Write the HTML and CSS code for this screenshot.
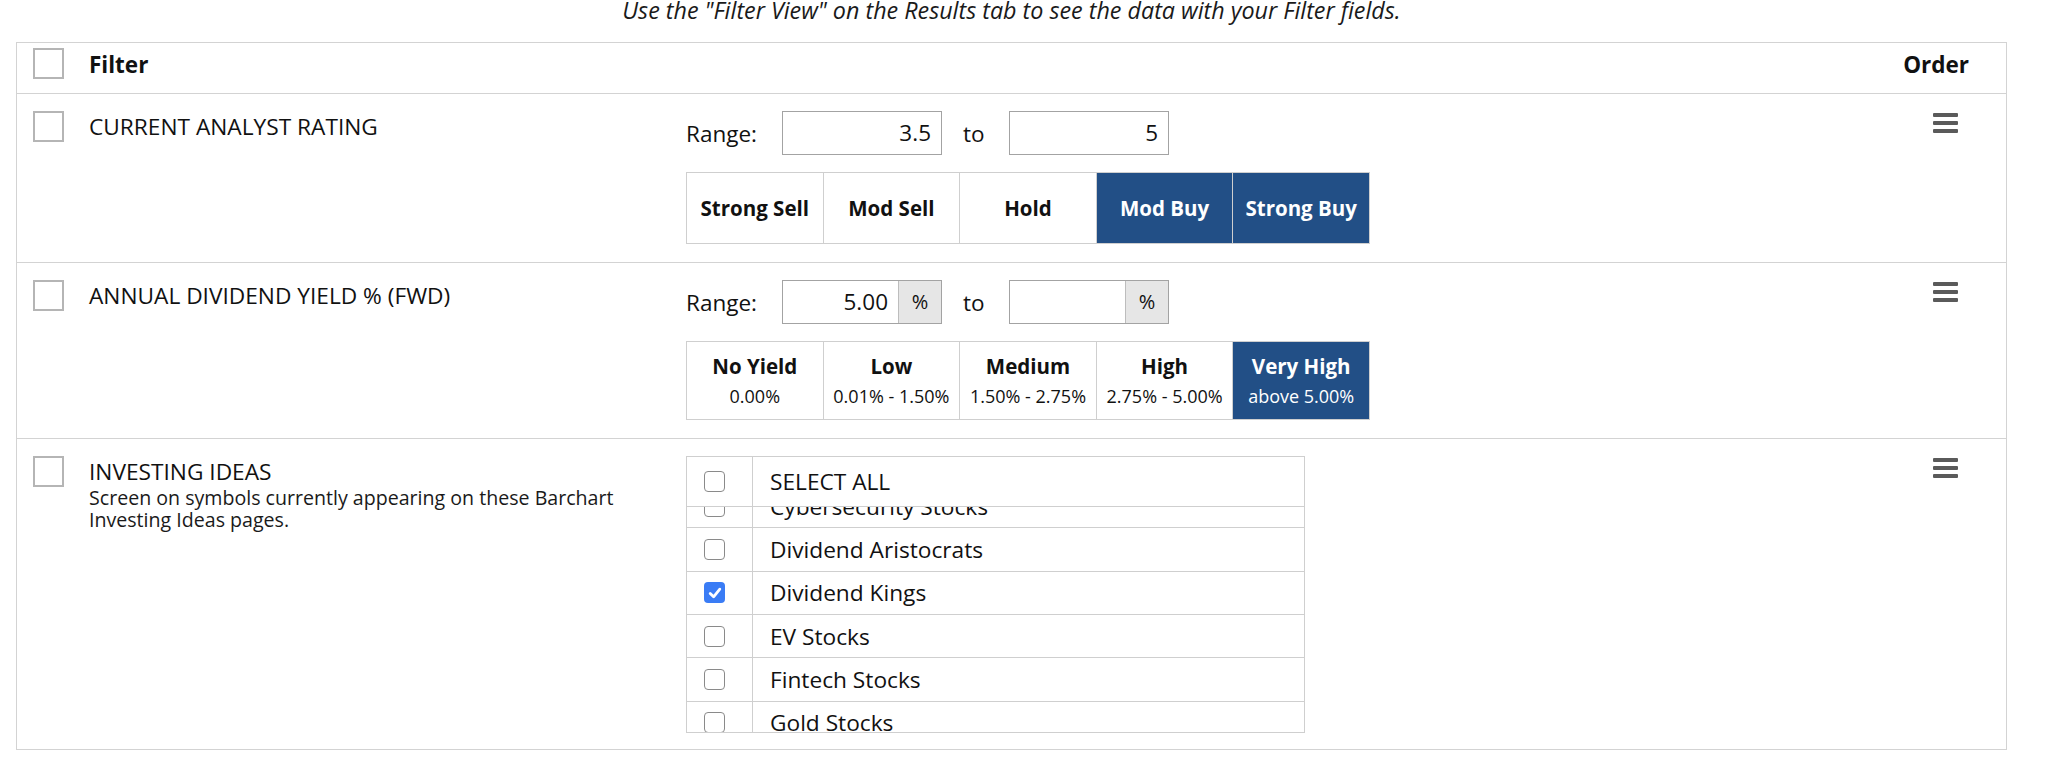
FILE: index.html
```html
<!DOCTYPE html>
<html lang="en">
<head>
<meta charset="utf-8">
<title>Screener Filters</title>
<link rel="stylesheet" href="styles.css">
</head>
<body>
<div class="page">
  <p class="note">Use the "Filter View" on the Results tab to see the data with your Filter fields.</p>
  <div class="table">
    <div class="row head">
      <div class="lead"><span class="box"></span><span class="col-title">Filter</span></div>
      <div class="mid"></div>
      <div class="order"><span class="order-label">Order</span></div>
    </div>

    <div class="row r1">
      <div class="lead"><span class="box"></span><div class="info"><div class="title">CURRENT ANALYST RATING</div></div></div>
      <div class="mid">
        <div class="range">
          <span class="range-label">Range:</span>
          <div class="field"><span class="val">3.5</span></div>
          <span class="to">to</span>
          <div class="field"><span class="val">5</span></div>
        </div>
        <div class="seg single">
          <div class="opt">Strong Sell</div>
          <div class="opt">Mod Sell</div>
          <div class="opt">Hold</div>
          <div class="opt on">Mod Buy</div>
          <div class="opt on">Strong Buy</div>
        </div>
      </div>
      <div class="order"><span class="burger"><i></i><i></i><i></i></span></div>
    </div>

    <div class="row r2">
      <div class="lead"><span class="box"></span><div class="info"><div class="title">ANNUAL DIVIDEND YIELD % (FWD)</div></div></div>
      <div class="mid">
        <div class="range">
          <span class="range-label">Range:</span>
          <div class="field"><span class="val">5.00</span><span class="addon">%</span></div>
          <span class="to">to</span>
          <div class="field"><span class="val"></span><span class="addon">%</span></div>
        </div>
        <div class="seg double">
          <div class="opt"><span class="opt-main">No Yield</span><span class="opt-sub">0.00%</span></div>
          <div class="opt"><span class="opt-main">Low</span><span class="opt-sub">0.01% - 1.50%</span></div>
          <div class="opt"><span class="opt-main">Medium</span><span class="opt-sub">1.50% - 2.75%</span></div>
          <div class="opt"><span class="opt-main">High</span><span class="opt-sub">2.75% - 5.00%</span></div>
          <div class="opt on"><span class="opt-main">Very High</span><span class="opt-sub">above 5.00%</span></div>
        </div>
      </div>
      <div class="order"><span class="burger"><i></i><i></i><i></i></span></div>
    </div>

    <div class="row r3">
      <div class="lead"><span class="box"></span>
        <div class="info">
          <div class="title">INVESTING IDEAS</div>
          <div class="desc">Screen on symbols currently appearing on these Barchart Investing Ideas pages.</div>
        </div>
      </div>
      <div class="mid">
        <div class="list">
          <div class="list-head">
            <div class="cbcell"><span class="cb"></span></div>
            <div class="lbl">SELECT ALL</div>
          </div>
          <div class="list-body">
            <div class="list-inner">
              <div class="item"><div class="cbcell"><span class="cb"></span></div><div class="lbl">Cybersecurity Stocks</div></div>
              <div class="item"><div class="cbcell"><span class="cb"></span></div><div class="lbl">Dividend Aristocrats</div></div>
              <div class="item"><div class="cbcell"><span class="cb checked"><svg viewBox="0 0 20 20" width="20" height="20"><path d="M5.2 10.4 L8.6 13.8 L14.8 6.2" fill="none" stroke="#fff" stroke-width="2.8" stroke-linecap="round" stroke-linejoin="round"/></svg></span></div><div class="lbl">Dividend Kings</div></div>
              <div class="item"><div class="cbcell"><span class="cb"></span></div><div class="lbl">EV Stocks</div></div>
              <div class="item"><div class="cbcell"><span class="cb"></span></div><div class="lbl">Fintech Stocks</div></div>
              <div class="item"><div class="cbcell"><span class="cb"></span></div><div class="lbl">Gold Stocks</div></div>
              <div class="item"><div class="cbcell"><span class="cb"></span></div><div class="lbl">Growth Stocks</div></div>
            </div>
          </div>
        </div>
      </div>
      <div class="order"><span class="burger"><i></i><i></i><i></i></span></div>
    </div>
  </div>
</div>
</body>
</html>
```

FILE: styles.css
```css
* { box-sizing: border-box; }

body {
  margin: 0;
  background: #fff;
  color: #111;
  font-family: "Open Sans", "Noto Sans", sans-serif;
}

.page {
  width: 1991px;
  margin-left: 16px;
}

.note {
  margin: -5px 0 0;
  height: 47px;
  font-size: 23.3px;
  line-height: 30px;
  font-style: italic;
  text-align: center;
  color: #1a1a1a;
}

.table {
  border: 1px solid #d3d3d3;
}

.row {
  display: flex;
  border-top: 1px solid #d3d3d3;
  padding: 17px 0 18px;
}

.row.head {
  border-top: 0;
  height: 50px;
  padding: 5px 0 0;
}

.row.r3 {
  padding-bottom: 16px;
}

.lead {
  width: 669px;
  flex: none;
  display: flex;
  align-items: flex-start;
  gap: 25px;
  padding: 0 20px 0 16px;
}

.box {
  flex: none;
  width: 31px;
  height: 31px;
  border: 2px solid #b5b5b5;
  background: #fff;
}

.col-title,
.order-label {
  font-size: 22.5px;
  line-height: 30px;
  font-weight: 700;
  margin-top: 2px;
}

.info {
  margin-top: 1px;
}

.title {
  font-size: 22.7px;
  line-height: 30px;
}

.desc {
  font-size: 19.6px;
  line-height: 22px;
  color: #1a1a1a;
}

.mid {
  flex: 1;
}

.order {
  width: 126px;
  flex: none;
  display: flex;
  justify-content: flex-end;
  align-items: flex-start;
  padding-right: 37px;
}

.burger {
  display: flex;
  flex-direction: column;
  gap: 4px;
  margin: 2px 11px 0 0;
}

.burger i {
  display: block;
  width: 25px;
  height: 4px;
  border-radius: 1px;
  background: #5a5a5a;
}

.range {
  display: flex;
  align-items: center;
  height: 44px;
  font-size: 22.5px;
}

.range-label {
  width: 96px;
}

.to {
  width: 67px;
  padding-left: 21px;
}

.field {
  display: flex;
  width: 160px;
  height: 44px;
  border: 1px solid #a3a3a3;
  background: #fff;
}

.val {
  flex: 1;
  text-align: right;
  padding-right: 10px;
  line-height: 42px;
}

.addon {
  width: 43px;
  flex: none;
  border-left: 1px solid #bdbdbd;
  background: #e6e6e6;
  text-align: center;
  font-size: 20px;
  line-height: 42px;
}

.seg {
  display: grid;
  grid-template-columns: repeat(5, 1fr);
  gap: 1px;
  padding: 1px;
  width: 684px;
  margin-top: 17px;
  background: #cfcfcf;
}

.seg.single { height: 72px; }
.seg.double { height: 79px; }

.opt {
  display: flex;
  flex-direction: column;
  align-items: center;
  justify-content: center;
  background: #fff;
  font-size: 20.5px;
  font-weight: 700;
  color: #111;
}

.opt.on {
  background: #224f86;
  color: #fff;
}

.opt-main {
  line-height: 30px;
}

.opt-sub {
  font-size: 18px;
  line-height: 30px;
  font-weight: 400;
}

.list {
  width: 619px;
  height: 277px;
  border: 1px solid #cfcfcf;
  display: flex;
  flex-direction: column;
}

.list-head {
  display: flex;
  height: 50px;
  flex: none;
  border-bottom: 1px solid #cfcfcf;
}

.cbcell {
  width: 66px;
  flex: none;
  display: flex;
  align-items: center;
  padding-left: 17px;
  border-right: 1px solid #cfcfcf;
}

.lbl {
  display: flex;
  align-items: center;
  padding-left: 17px;
  font-size: 22.7px;
}

.list-body {
  flex: 1;
  overflow: hidden;
}

.list-inner {
  margin-top: -22px;
}

.item {
  display: flex;
  height: 43.33px;
  border-bottom: 1px solid #cfcfcf;
}

.cb {
  display: block;
  width: 21px;
  height: 21px;
  border: 1.5px solid #8a8a8a;
  border-radius: 4px;
  background: #fff;
}

.cb.checked {
  border: 0;
  background: #3a7cf5;
}

.cb svg {
  display: block;
  margin: 0.5px;
}
```
